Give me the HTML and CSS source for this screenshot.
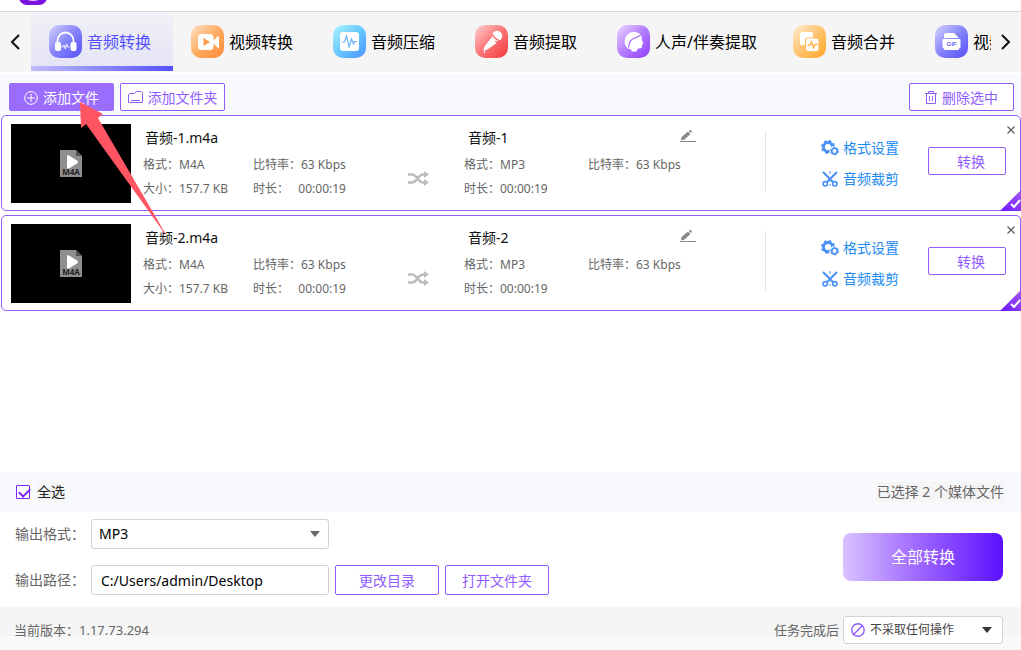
FILE: index.html
```html
<!DOCTYPE html>
<html lang="zh-CN">
<head>
  <meta charset="UTF-8">
  <meta name="viewport" content="width=device-width, initial-scale=1">
  <title>音频转换</title>
  <link rel="stylesheet" href="styles.css">
</head>
<body>
  <!-- shared gradients and icons -->
  <svg class="defs" width="0" height="0" aria-hidden="true">
    <defs>
      <linearGradient id="gBlue" x1="0" y1="0" x2="1" y2="1"><stop offset="0" stop-color="#d4d4ff"/><stop offset=".5" stop-color="#8583fb"/><stop offset="1" stop-color="#5550f8"/></linearGradient>
      <linearGradient id="gOrange" x1="0" y1="0" x2="1" y2="1"><stop offset="0" stop-color="#ffe2c4"/><stop offset=".5" stop-color="#ffac62"/><stop offset="1" stop-color="#ff8a35"/></linearGradient>
      <linearGradient id="gCyan" x1="0" y1="0" x2="1" y2="1"><stop offset="0" stop-color="#b0f3ff"/><stop offset=".5" stop-color="#66c9ff"/><stop offset="1" stop-color="#4d90ff"/></linearGradient>
      <linearGradient id="gRed" x1="0" y1="0" x2="1" y2="1"><stop offset="0" stop-color="#ffd0d0"/><stop offset=".5" stop-color="#fc7476"/><stop offset="1" stop-color="#f2393d"/></linearGradient>
      <linearGradient id="gPurple" x1="0" y1="0" x2="1" y2="1"><stop offset="0" stop-color="#ead8ff"/><stop offset=".5" stop-color="#b37cff"/><stop offset="1" stop-color="#8f3dfc"/></linearGradient>
      <linearGradient id="gYellow" x1="0" y1="0" x2="1" y2="1"><stop offset="0" stop-color="#ffeed2"/><stop offset=".5" stop-color="#ffc470"/><stop offset="1" stop-color="#ffa726"/></linearGradient>
      <linearGradient id="gCorner" x1="0" y1="1" x2="1" y2="0"><stop offset="0" stop-color="#6a14ff"/><stop offset="1" stop-color="#a558f5"/></linearGradient>
    </defs>
    <symbol id="file" viewBox="0 0 22 27">
      <path d="M0 0h16l6 6v21H0z" fill="#8e8e8e"/>
      <path d="M16 0v6h6z" fill="#555"/>
      <path d="M7 6.500Q7 4.500 9 5.500L17 10.500Q19 12 17 13.500L9 18.500Q7 19.500 7 17.500z" fill="#fff"/>
      <text x="11" y="25" text-anchor="middle" class="file-ext">M4A</text>
    </symbol>
    <symbol id="shuffle" viewBox="0 0 21 15">
      <path d="M0 3.500h4c5 0 6 8 11 8h2M0 11.500h4c5 0 6-8 11-8h2" fill="none" stroke="#bdbdbd" stroke-width="2.600"/>
      <path d="M16 0l5 3.500-5 3.500zM16 8l5 3.500-5 3.500z" fill="#bdbdbd"/>
    </symbol>
    <symbol id="pencil" viewBox="0 0 16 13">
      <path d="M1 10.500l.5-3.500L8 1.500l2.500 2.500L4.500 9.500zM8.800 1l1-1h1l1 1v1l-.8 1z" fill="#8a8a8a"/>
      <path d="M0 11.500h16" stroke="#8a8a8a"/>
    </symbol>
    <symbol id="gears" viewBox="0 0 18 16">
      <circle cx="7" cy="7" r="4.500" fill="none" stroke="#4a90f5" stroke-width="2.800"/>
      <circle cx="7" cy="7" r="6.200" fill="none" stroke="#4a90f5" stroke-width="1.600" stroke-dasharray="2.600 2.270"/>
      <circle cx="13.500" cy="11" r="5" fill="#fff"/>
      <circle cx="13.500" cy="11" r="2.800" fill="none" stroke="#4a90f5" stroke-width="1.700"/>
      <circle cx="13.500" cy="11" r="4" fill="none" stroke="#4a90f5" stroke-width="1" stroke-dasharray="2 2.190"/>
    </symbol>
    <symbol id="cut" viewBox="0 0 16 16">
      <path d="M1 1l10 10M15 1L5 11" stroke="#4a90f5" stroke-width="2"/>
      <circle cx="3.200" cy="12.800" r="2.200" fill="none" stroke="#4a90f5" stroke-width="1.600"/>
      <circle cx="12.800" cy="12.800" r="2.200" fill="none" stroke="#4a90f5" stroke-width="1.600"/>
      <path d="M8 0v3M8 10v1M8 13v2" stroke="#4a90f5"/>
    </symbol>
    <symbol id="close" viewBox="0 0 8 8">
      <path d="M.5.5l7 7M7.500.5l-7 7" stroke="#555" stroke-width="1.100"/>
    </symbol>
    <symbol id="corner" viewBox="0 0 21 21">
      <path d="M21 0v21H0z" fill="url(#gCorner)"/>
      <path d="M11 14l3 3 6-7" fill="none" stroke="#fff" stroke-width="2"/>
    </symbol>
  </svg>

  <header class="titlebar">
    <svg class="logo" width="28" height="28" viewBox="0 0 28 28"><rect width="28" height="28" rx="8" fill="#7a12e0"/><ellipse cx="14" cy="20" rx="8" ry="4" fill="#e9c8ff"/></svg>
  </header>

  <nav class="tabs">
    <button class="tab-arrow" aria-label="上一页"><svg width="10" height="16" viewBox="0 0 10 16"><path d="M9 1L2 8l7 7" fill="none" stroke="#111" stroke-width="2"/></svg></button>
    <div class="tab-strip">
      <a href="#" class="tab active">
        <svg width="33" height="33" viewBox="0 0 33 33"><rect width="33" height="33" rx="10" fill="url(#gBlue)"/><path d="M8.500 18v-2.500a8 8 0 0 1 16 0V18" fill="none" stroke="#fff" stroke-width="1.800"/><rect x="6" y="17" width="6" height="9" rx="2" fill="#fff"/><rect x="21.500" y="17" width="6" height="9" rx="2" fill="#fff"/><path d="M12.500 22h1.500l1-2 1.500 4 1-5 1.500 3h1.500" fill="none" stroke="#fff"/></svg>
        <span>音频转换</span>
      </a>
      <a href="#" class="tab">
        <svg width="33" height="33" viewBox="0 0 33 33"><rect width="33" height="33" rx="10" fill="url(#gOrange)"/><rect x="7" y="9" width="15.500" height="16" rx="3.500" fill="#fff"/><path d="M21 17l5.500-5.500q1.500-1 1.500.5v10q0 1.500-1.500.5z" fill="#fff"/><path d="M12.500 13l6.500 4-6.500 4z" fill="#ff9a4b"/></svg>
        <span>视频转换</span>
      </a>
      <a href="#" class="tab">
        <svg width="33" height="33" viewBox="0 0 33 33"><rect width="33" height="33" rx="10" fill="url(#gCyan)"/><rect x="7" y="7" width="19" height="19" rx="3" fill="#fff"/><path d="M9 17h2.500l2-6 2.500 11 2.500-8 2 5 1-2.500h2.500" fill="none" stroke="#5caeff" stroke-width="1.100"/></svg>
        <span>音频压缩</span>
      </a>
      <a href="#" class="tab">
        <svg width="33" height="33" viewBox="0 0 33 33"><rect width="33" height="33" rx="10" fill="url(#gRed)"/><path d="M16.500 12.500l5 5.500-9 6.500q-2 1-3-.3-.8-1.200 0-2.700z" fill="#fff"/><circle cx="22" cy="11" r="5.200" fill="#fff"/><path d="M17.500 9q1.500 5 8 7" fill="none" stroke="#fb6b6d" stroke-width="1.200"/><path d="M9.500 23v3.500M9.500 27v1" stroke="#fff" stroke-width="1.400"/></svg>
        <span>音频提取</span>
      </a>
      <a href="#" class="tab">
        <svg width="33" height="33" viewBox="0 0 33 33"><rect width="33" height="33" rx="10" fill="url(#gPurple)"/><path d="M9 21.500Q6.500 17 8.500 12.500 11 7 17 7q5.500 0 7.500 3.500l.3 4 1.500 4.500-1.300.7v2.500q-.5 1.300-4 1.300l-1.500 3h-4.500l-1-2-1.500-.5q-2.500-.5-3.500-2.500z" fill="#fff"/><path d="M11.500 22.500q.5-6.500 4-8.500 4.500-1.500 9-4.500" fill="none" stroke="#a766fb" stroke-width="1.300"/></svg>
        <span>人声/伴奏提取</span>
      </a>
      <a href="#" class="tab">
        <svg width="33" height="33" viewBox="0 0 33 33"><rect width="33" height="33" rx="10" fill="url(#gYellow)"/><rect x="7" y="7" width="13" height="13" rx="2" fill="#fff"/><rect x="12.500" y="13" width="13.500" height="13.500" rx="2.500" fill="#fff" stroke="#ffbd60" stroke-width="1.200"/><path d="M14.500 20h2.500l1.500-3 2 6 1.500-3.500h2.500" fill="none" stroke="#ffad3a" stroke-width="1.300"/></svg>
        <span>音频合并</span>
      </a>
      <a href="#" class="tab">
        <svg width="33" height="33" viewBox="0 0 33 33"><rect width="33" height="33" rx="10" fill="url(#gBlue)"/><path d="M9 13v-3q0-2 2-2h8l5 5zM8.500 23h16q0 2-2 2h-12q-2 0-2-2z" fill="#fff"/><rect x="7.500" y="14" width="18" height="9" rx="1" fill="#fff"/><text x="16.500" y="21" text-anchor="middle" class="gif">GIF</text></svg>
        <span>视频转GIF</span>
      </a>
    </div>
    <button class="tab-arrow" aria-label="下一页"><svg width="10" height="16" viewBox="0 0 10 16"><path d="M1 1l7 7-7 7" fill="none" stroke="#111" stroke-width="2"/></svg></button>
  </nav>

  <div class="toolbar">
    <button class="btn primary">
      <svg width="14" height="14" viewBox="0 0 14 14" fill="none" stroke="#fff"><circle cx="7" cy="7" r="6.300"/><path d="M7 3v8M3 7h8"/></svg>
      添加文件
    </button>
    <button class="btn">
      <svg width="15" height="13" viewBox="0 0 15 13" fill="none" stroke="#8f5cff"><path d="M.5 11.500v-8l1-1h5l2-2h5l1 1v10zM3 9.500h9"/></svg>
      添加文件夹
    </button>
    <button class="btn delete">
      <svg width="12" height="13" viewBox="0 0 12 13" fill="none" stroke="#8f5cff"><path d="M0 2.500h12M3.500 2V.5h5V2M1.500 3v9.500h9V3M4.500 5v5M7.500 5v5"/></svg>
      删除选中
    </button>
    <!-- pointer to the add button -->
    <svg class="pointer" width="90" height="138" viewBox="0 0 90 138"><path d="M1 1l23 12-5 4 70 120L7 23l-5 4z" fill="#ff5563"/></svg>
  </div>

  <main class="list">
    <article class="card">
      <div class="thumb"><svg width="22" height="27"><use href="#file"/></svg></div>
      <div class="info">
        <h2>音频-1.m4a</h2>
        <div class="meta"><span>格式：M4A</span><span>比特率：63 Kbps</span></div>
        <div class="meta"><span>大小：157.7 KB</span><span>时长：&nbsp;&nbsp; 00:00:19</span></div>
      </div>
      <svg class="shuffle" width="21" height="15"><use href="#shuffle"/></svg>
      <div class="info target">
        <h2>音频-1 <button class="edit" aria-label="重命名"><svg width="16" height="13"><use href="#pencil"/></svg></button></h2>
        <div class="meta"><span>格式：MP3</span><span>比特率：63 Kbps</span></div>
        <div class="meta"><span>时长：00:00:19</span></div>
      </div>
      <div class="actions">
        <a href="#"><svg width="18" height="16"><use href="#gears"/></svg>格式设置</a>
        <a href="#"><svg width="18" height="16"><use href="#cut"/></svg>音频裁剪</a>
      </div>
      <button class="btn convert">转换</button>
      <button class="close" aria-label="移除"><svg width="8" height="8"><use href="#close"/></svg></button>
      <svg class="corner" width="21" height="21"><use href="#corner"/></svg>
    </article>

    <article class="card">
      <div class="thumb"><svg width="22" height="27"><use href="#file"/></svg></div>
      <div class="info">
        <h2>音频-2.m4a</h2>
        <div class="meta"><span>格式：M4A</span><span>比特率：63 Kbps</span></div>
        <div class="meta"><span>大小：157.7 KB</span><span>时长：&nbsp;&nbsp; 00:00:19</span></div>
      </div>
      <svg class="shuffle" width="21" height="15"><use href="#shuffle"/></svg>
      <div class="info target">
        <h2>音频-2 <button class="edit" aria-label="重命名"><svg width="16" height="13"><use href="#pencil"/></svg></button></h2>
        <div class="meta"><span>格式：MP3</span><span>比特率：63 Kbps</span></div>
        <div class="meta"><span>时长：00:00:19</span></div>
      </div>
      <div class="actions">
        <a href="#"><svg width="18" height="16"><use href="#gears"/></svg>格式设置</a>
        <a href="#"><svg width="18" height="16"><use href="#cut"/></svg>音频裁剪</a>
      </div>
      <button class="btn convert">转换</button>
      <button class="close" aria-label="移除"><svg width="8" height="8"><use href="#close"/></svg></button>
      <svg class="corner" width="21" height="21"><use href="#corner"/></svg>
    </article>
  </main>

  <div class="select-bar">
    <input type="checkbox" id="all" checked>
    <label for="all">全选</label>
    <span class="count">已选择 2 个媒体文件</span>
  </div>

  <section class="output">
    <div class="fields">
      <div class="row">
        <label for="format">输出格式：</label>
        <div class="select">
          <select id="format"><option>MP3</option></select>
          <svg width="10" height="6" viewBox="0 0 10 6"><path d="M0 0h10L5 6z" fill="#666"/></svg>
        </div>
      </div>
      <div class="row">
        <label for="path">输出路径：</label>
        <input type="text" id="path" value="C:/Users/admin/Desktop">
        <button class="btn">更改目录</button>
        <button class="btn">打开文件夹</button>
      </div>
    </div>
    <button class="convert-all">全部转换</button>
  </section>

  <footer class="status">
    <span>当前版本：1.17.73.294</span>
    <label class="after" for="after">任务完成后</label>
    <div class="select small">
      <svg class="none" width="14" height="14" viewBox="0 0 14 14" fill="none" stroke="#8f5cff" stroke-width="1.400"><circle cx="7" cy="7" r="6.200"/><path d="M2.600 11.400l8.800-8.800"/></svg>
      <select id="after"><option>不采取任何操作</option></select>
      <svg width="10" height="6" viewBox="0 0 10 6"><path d="M0 0h10L5 6z" fill="#333"/></svg>
    </div>
  </footer>
</body>
</html>
```
FILE: styles.css
```css
* { box-sizing: border-box; }
body {
  margin: 0;
  min-height: 100vh;
  display: flex;
  flex-direction: column;
  background: #fff;
  color: #666;
  font-family: "Noto Sans", "Noto Sans CJK SC", sans-serif;
  font-size: 14px;
  line-height: 20px;
}
button, input, select {
  font: inherit;
  margin: 0;
}
button {
  padding: 0;
  border: none;
  background: none;
  cursor: pointer;
}
a { text-decoration: none; }
svg { flex: none; display: block; }
.defs { position: absolute; }

.titlebar {
  height: 12px;
  padding-left: 19px;
  display: flex;
  align-items: flex-end;
  overflow: hidden;
  border-bottom: 1px solid #d6d6d6;
}
.logo { margin-bottom: 6px; }

/* tabs */
.tabs {
  display: flex;
  height: 60px;
  margin-bottom: 2px;
  background: #f5f5f5;
}
.tab-arrow {
  flex: none;
  width: 30px;
  display: flex;
  align-items: center;
  justify-content: center;
}
.tab-strip {
  flex: 1;
  min-width: 0;
  display: flex;
  overflow: hidden;
  padding-left: 1px;
}
.tab {
  flex: none;
  display: flex;
  align-items: center;
  gap: 5px;
  min-width: 142px;
  height: 59px;
  padding: 0 18px;
  color: #000;
  font-size: 16px;
  white-space: nowrap;
}
.tab.active {
  color: #5550ff;
  background: linear-gradient(to right, #c0bdff, #5550ff) bottom / 100% 5px no-repeat,
    linear-gradient(#f1f1f7, #e3e3f5);
}
.gif {
  font: bold 6px "Liberation Sans", sans-serif;
  fill: #6b68fa;
}

.toolbar {
  position: relative;
  display: flex;
  gap: 6px;
  padding: 9px 7px 4px 9px;
  background: #f8f9fd;
}
.btn {
  display: flex;
  align-items: center;
  justify-content: center;
  gap: 5px;
  width: 105px;
  height: 28px;
  padding-top: 1px;
  color: #8f5cff;
  background: #fff;
  border: 1px solid #8f5cff;
  border-radius: 2px;
}
.btn.primary {
  color: #fff;
  background: #9b6dff;
  border-color: #9b6dff;
}
.delete { margin-left: auto; }
.pointer {
  position: absolute;
  left: 79px;
  top: 27px;
  z-index: 1;
}

/* file list */
.list {
  flex: 1;
  padding-left: 1px;
}
.card {
  position: relative;
  display: grid;
  grid-template-columns: 132px 265px 56px minmax(302px, 1fr) 162px 93px;
  height: 96px;
  margin-bottom: 4px;
  padding: 8px 0 8px 9px;
  border: 1px solid #8f5cff;
  border-radius: 5px;
}
.thumb {
  width: 120px;
  height: 79px;
  display: flex;
  align-items: center;
  justify-content: center;
  background: #000;
}
.file-ext {
  font: bold 8px "Noto Sans", sans-serif;
  fill: #222;
}
.info h2 {
  display: flex;
  align-items: center;
  height: 28px;
  margin: 0 0 1px;
  padding-left: 2px;
  color: #111;
  font-size: 14px;
  font-weight: normal;
}
.meta {
  display: grid;
  grid-template-columns: 110px 1fr;
  font-size: 12px;
  line-height: 24px;
}
.target { border-right: 1px solid #e2e2f0; height: 60px; margin-top: 7px; }
.target h2 { padding-left: 4px; margin-top: -7px; }
.target .meta { grid-template-columns: 124px 1fr; }
.edit { margin: 0 69px 4px auto; }
.shuffle { margin-top: 47px; }
.actions {
  padding: 8px 0 0 55px;
}
.actions a {
  display: flex;
  align-items: center;
  gap: 4px;
  height: 31px;
  color: #1d8bf0;
}
.convert {
  width: 78px;
  margin-top: 23px;
  padding-left: 8px;
}
.close {
  position: absolute;
  right: 5px;
  top: 10px;
}
.corner {
  position: absolute;
  right: -1px;
  bottom: -1px;
}

.select-bar {
  display: flex;
  align-items: center;
  height: 40px;
  padding: 0 17px 0 16px;
  background: #f8f9fd;
}
.select-bar label {
  margin-left: 7px;
  color: #222;
  background: #f5f5f5;
}
.count {
  margin-left: auto;
  background: #f5f5f5;
}
input[type="checkbox"] {
  appearance: none;
  width: 14px;
  height: 14px;
  border: 1px solid #7a22ff;
  border-radius: 1px;
  background: #fff;
}
input[type="checkbox"]:checked::after {
  content: "";
  display: block;
  width: 9px;
  height: 5px;
  margin: 2px 0 0 2px;
  border: solid #7a22ff;
  border-width: 0 0 2px 2px;
  transform: rotate(-45deg);
}

/* output settings */
.output {
  display: flex;
  align-items: center;
  justify-content: space-between;
  padding: 7px 18px 12px 15px;
}
.fields {
  display: grid;
  gap: 16px;
}
.row {
  display: flex;
  align-items: center;
  gap: 6px;
}
.row label { width: 70px; }
.row .btn {
  width: 104px;
  height: 30px;
}
.select, input[type="text"] {
  width: 238px;
  height: 30px;
  color: #000;
  background: #fff;
  border: 1px solid #d2d2d2;
  border-radius: 3px;
}
input[type="text"] { padding: 0 9px; }
.select {
  position: relative;
  display: flex;
  align-items: center;
}
.select select {
  appearance: none;
  width: 100%;
  height: 100%;
  padding: 0 24px 0 7px;
  color: inherit;
  background: none;
  border: none;
}
.select svg {
  position: absolute;
  right: 8px;
  pointer-events: none;
}
.convert-all {
  width: 160px;
  height: 48px;
  color: #fff;
  font-size: 16px;
  background: linear-gradient(to right, #d9c2ff, #9b62ff 50%, #5a10ff);
  border-radius: 8px;
}

.status {
  display: flex;
  align-items: center;
  gap: 4px;
  height: 43px;
  padding: 2px 18px 0 14px;
  font-size: 13px;
  background: linear-gradient(#f5f5f5 29px, #f9f9f9 29px);
}
.after { margin-left: auto; }
.select.small {
  width: 160px;
  height: 28px;
  color: #444;
  font-size: 12px;
}
.small select { padding-left: 26px; }
.select svg.none { left: 7px; }
.select.small svg:last-child { right: 10px; }
```
